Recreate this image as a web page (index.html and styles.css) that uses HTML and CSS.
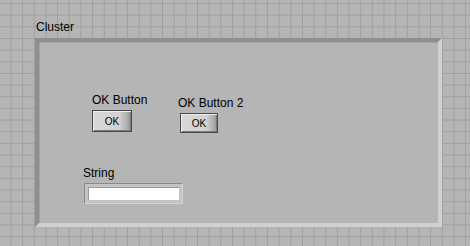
FILE: index.html
```html
<!DOCTYPE html>
<html lang="en">
<head>
<meta charset="UTF-8" />
<title>Cluster</title>
<link rel="stylesheet" href="styles.css">
</head>
<body>
  <div class="panel">
    <div class="cluster-label">Cluster</div>
    <div class="cluster">
      <div class="button-row">
        <div class="control control-ok">
          <div class="label">OK Button</div>
          <button class="ok-btn">OK</button>
        </div>
        <div class="control control-ok2">
          <div class="label">OK Button 2</div>
          <button class="ok-btn ok-btn-small">OK</button>
        </div>
      </div>
      <div class="control control-string">
        <div class="label">String</div>
        <div class="string-box"><div class="string-field"></div></div>
      </div>
    </div>
  </div>
</body>
</html>
```

FILE: styles.css
```css
/* Front panel with grid */
* {
  box-sizing: border-box;
}
html, body {
  margin: 0;
  height: 100%;
}
body {
  font-family: "Liberation Sans", Arial, sans-serif;
  font-size: 12px;
  line-height: 14px;
  color: #000;
  background-color: #b5b5b5;
  background-image:
    linear-gradient(to right, #9f9f9f 1px, transparent 1px),
    linear-gradient(to bottom, #9f9f9f 1px, transparent 1px);
  background-size: 11.67px 11.67px;
  background-position: 10.5px 3px;
  overflow: hidden;
}

.panel {
  padding: 20px 0 0 35px;
}

.cluster-label {
  margin-left: 1px;
  height: 18px;
}

/* Cluster frame */
.cluster {
  width: 407px;
  height: 189px;
  background: #b5b5b5;
  border: 4px solid;
  border-color: #8f8f8f #d0d0d0 #d0d0d0 #8f8f8f;
  box-shadow: inset 1px 1px 0 #a2a2a2;
}

.button-row {
  display: flex;
  align-items: flex-start;
  padding: 51px 0 0 53px;
}

.label {
  white-space: nowrap;
  height: 14px;
}

.control-ok {
  width: 86px;
}
.control-ok2 {
  margin-top: 3px;
}

/* Boolean buttons */
.ok-btn {
  display: block;
  width: 40px;
  height: 22px;
  margin-top: 3px;
  padding: 0;
  font-family: "Liberation Sans", Arial, sans-serif;
  font-size: 10px;
  color: #000;
  border: 1px solid #4a4a4a;
  background: linear-gradient(to right, #d8d8d8 0%, #d1d1d1 70%, #aaaaaa 92%, #8c8c8c 100%);
  box-shadow: inset 1px 1px 0 #ededed, inset -1px -1px 0 #7a7a7a;
}
.ok-btn-small {
  width: 38px;
  height: 20px;
  margin-top: 3px;
  margin-left: 2px;
}

/* String control */
.control-string {
  margin: 33px 0 0 44px;
}
.string-box {
  width: 99px;
  height: 21px;
  margin: 3px 0 0 1px;
  padding: 3px 3px;
  background: #c4c4c4;
  border-top: 1px solid #8a8a8a;
  border-left: 1px solid #8a8a8a;
  border-right: 1px solid #d4d4d4;
  border-bottom: 1px solid #d4d4d4;
}
.string-field {
  height: 100%;
  background: #fff;
  border-top: 1px solid #9a9a9a;
  border-left: 1px solid #9a9a9a;
}
```
